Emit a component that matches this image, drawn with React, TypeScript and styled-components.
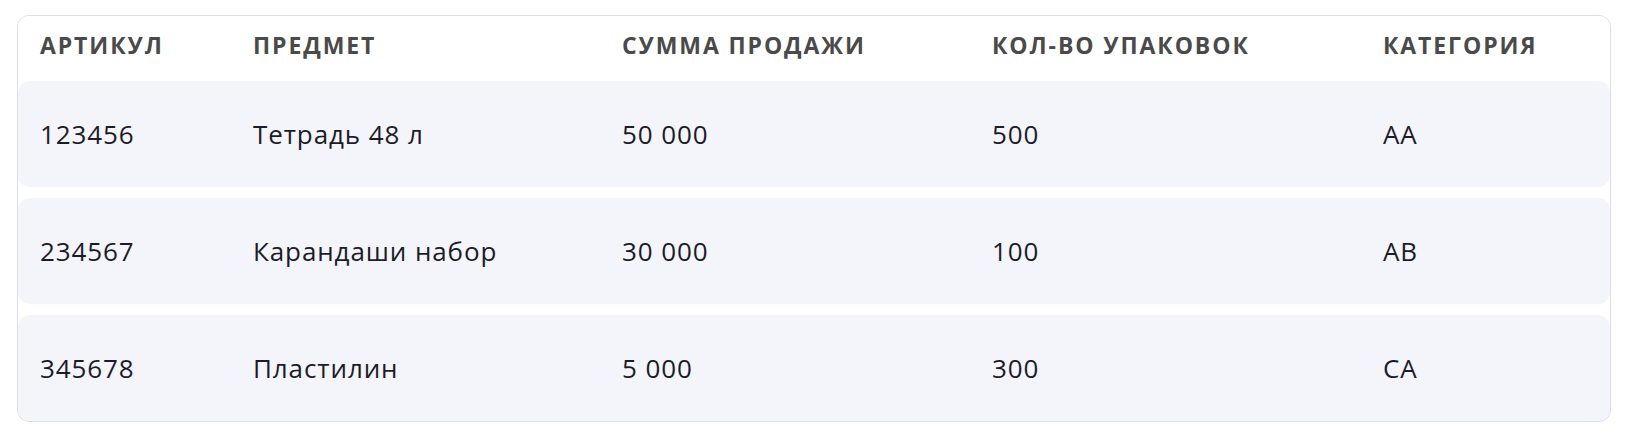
import React from 'react';
import styled, { createGlobalStyle } from 'styled-components';

type Sale = {
  sku: string;
  item: string;
  amount: string;
  packs: string;
  category: string;
};

const sales: Sale[] = [
  { sku: '123456', item: 'Тетрадь 48 л', amount: '50 000', packs: '500', category: 'AA' },
  { sku: '234567', item: 'Карандаши набор', amount: '30 000', packs: '100', category: 'AB' },
  { sku: '345678', item: 'Пластилин', amount: '5 000', packs: '300', category: 'CA' },
];

const GlobalStyle = createGlobalStyle`
  body {
    margin: 0;
    background: #ffffff;
    font-family: 'Open Sans', 'Noto Sans', sans-serif;
  }
`;

const Page = styled.div`
  padding: 15px 14px 0 17px;
`;

const Card = styled.div`
  border: 1px solid #dcdcee;
  border-radius: 12px;
  background: #fff;
  overflow: hidden;
`;

const Body = styled.div`
  display: flex;
  flex-direction: column;
  gap: 11px;
`;

const Row = styled.div<{ $head?: boolean }>`
  display: grid;
  grid-template-columns: 213px 369px 370px 391px 1fr;
  align-items: center;
  padding: ${(p) => (p.$head ? '0 22px 8px' : '0 22px')};
  height: ${(p) => (p.$head ? '65px' : '106px')};
  box-sizing: border-box;
  background: ${(p) => (p.$head ? '#ffffff' : '#f4f5fb')};
  border-radius: ${(p) => (p.$head ? '0' : '12px')};
`;

const HeadCell = styled.div`
  font-size: 23px;
  font-weight: 700;
  color: #4a4a4a;
  letter-spacing: 1.9px;
  white-space: nowrap;
`;

const Cell = styled.div`
  font-size: 26px;
  font-weight: 400;
  color: #1c1c28;
  letter-spacing: 0.9px;
  white-space: nowrap;
`;

export default function App() {
  return (
    <Page>
      <GlobalStyle />
      <Card>
        <Row $head>
          <HeadCell>АРТИКУЛ</HeadCell>
          <HeadCell>ПРЕДМЕТ</HeadCell>
          <HeadCell>СУММА ПРОДАЖИ</HeadCell>
          <HeadCell>КОЛ-ВО УПАКОВОК</HeadCell>
          <HeadCell>КАТЕГОРИЯ</HeadCell>
        </Row>
        <Body>
          {sales.map((s) => (
            <Row key={s.sku}>
              <Cell>{s.sku}</Cell>
              <Cell>{s.item}</Cell>
              <Cell>{s.amount}</Cell>
              <Cell>{s.packs}</Cell>
              <Cell>{s.category}</Cell>
            </Row>
          ))}
        </Body>
      </Card>
    </Page>
  );
}
